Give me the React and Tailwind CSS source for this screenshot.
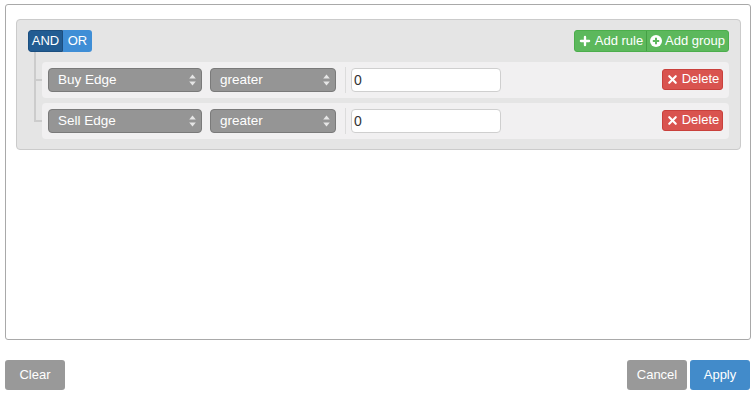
import React from 'react';
import { Plus, X } from 'lucide-react';

const rules = [
  { field: 'Buy Edge', op: 'greater', value: '0' },
  { field: 'Sell Edge', op: 'greater', value: '0' },
];

const Arrows = () => (
  <svg width="7" height="12" viewBox="0 0 7 12" className="shrink-0">
    <path d="M3.5 0.5 L6.8 4.6 H0.2 Z" fill="#e6e6e6" />
    <path d="M3.5 11.5 L6.8 7.4 H0.2 Z" fill="#e6e6e6" />
  </svg>
);

const Select = ({ label, width }) => (
  <div className={`${width} h-[24px] flex items-center justify-between pl-[9px] pr-[5px] bg-[#959595] border border-[#7a7a7a] rounded-[4px] text-white text-[13.5px]`}>
    <span>{label}</span>
    <Arrows />
  </div>
);

const CirclePlus = () => (
  <svg width="12" height="12" viewBox="0 0 12 12">
    <circle cx="6" cy="6" r="6" fill="white" />
    <path d="M6 2.8 V9.2 M2.8 6 H9.2" stroke="#5cb85c" strokeWidth="2" />
  </svg>
);

const RuleRow = ({ rule, first }) => (
  <div className="relative flex items-center h-[36px] bg-[#f1f0f1] rounded-[4px] pl-[6px] pr-[6px]">
    {/* tree connector */}
    <div className={`absolute left-[-8px] ${first ? 'top-[-10px] h-[29px]' : 'top-[-23px] h-[42px]'} w-[8px] border-l-2 border-b-2 border-[#cccccc]`} />
    <Select label={rule.field} width="w-[154px]" />
    <div className="ml-[8px]">
      <Select label={rule.op} width="w-[126px]" />
    </div>
    <div className="ml-[9px] w-px h-[26px] bg-[#dcdcdc]" />
    <div className="ml-[5px] w-[150px] h-[24px] bg-white border border-[#cfcfcf] rounded-[4px] flex items-center pl-[2px] text-[14px] text-[#333]">
      {rule.value}
    </div>
    <div className="ml-auto mb-[2px] w-[61px] h-[21px] flex items-center justify-center gap-[3px] bg-[#d9534f] border border-[#c9403c] rounded-[3px] text-white text-[13px]">
      <X size={13} strokeWidth={4} />
      <span>Delete</span>
    </div>
  </div>
);

export default function App() {
  return (
    <div className="w-[754px] h-[397px] bg-white font-['Liberation_Sans',Arial,sans-serif] pt-[4px] pl-[5px] pr-[3px]">
      <div className="h-[336px] border border-[#a9a9a9] rounded-[3px] pt-[14px] pl-[10px] pr-[9px]">
        <div className="bg-[#e5e5e5] border border-[#cbcbcb] rounded-[4px] pt-[10px] pb-[10px] pl-[11px] pr-[11px]">
          <div className="flex items-center justify-between h-[22px]">
            <div className="flex h-[22px] rounded-[3px] overflow-hidden text-white text-[13px]">
              <div className="w-[35px] flex items-center justify-center bg-[#225c92] border border-[#1c4f80] rounded-l-[3px]">AND</div>
              <div className="w-[29px] flex items-center justify-center bg-[#3f8ed6]">OR</div>
            </div>
            <div className="flex h-[22px] rounded-[3px] overflow-hidden text-white text-[13px] bg-[#5cb85c] border border-[#4cae4c]">
              <div className="w-[72px] flex items-center justify-center gap-[3px] border-r border-[#45a045]">
                <Plus size={14} strokeWidth={4} />
                <span>Add rule</span>
              </div>
              <div className="w-[81px] flex items-center justify-center gap-[3px]">
                <CirclePlus />
                <span>Add group</span>
              </div>
            </div>
          </div>
          <div className="ml-[14px] mt-[10px] flex flex-col gap-[5px]">
            {rules.map((r, i) => (
              <RuleRow key={i} rule={r} first={i === 0} />
            ))}
          </div>
        </div>
      </div>
      <div className="mt-[20px] flex items-center justify-between">
        <div className="w-[60px] h-[30px] flex items-center justify-center bg-[#999999] rounded-[3px] text-white text-[13px]">Clear</div>
        <div className="flex gap-[3px] pr-[1px]">
          <div className="w-[60px] h-[30px] flex items-center justify-center bg-[#999999] rounded-[3px] text-white text-[13px]">Cancel</div>
          <div className="w-[60px] h-[30px] flex items-center justify-center bg-[#428bca] rounded-[3px] text-white text-[13px]">Apply</div>
        </div>
      </div>
    </div>
  );
}
